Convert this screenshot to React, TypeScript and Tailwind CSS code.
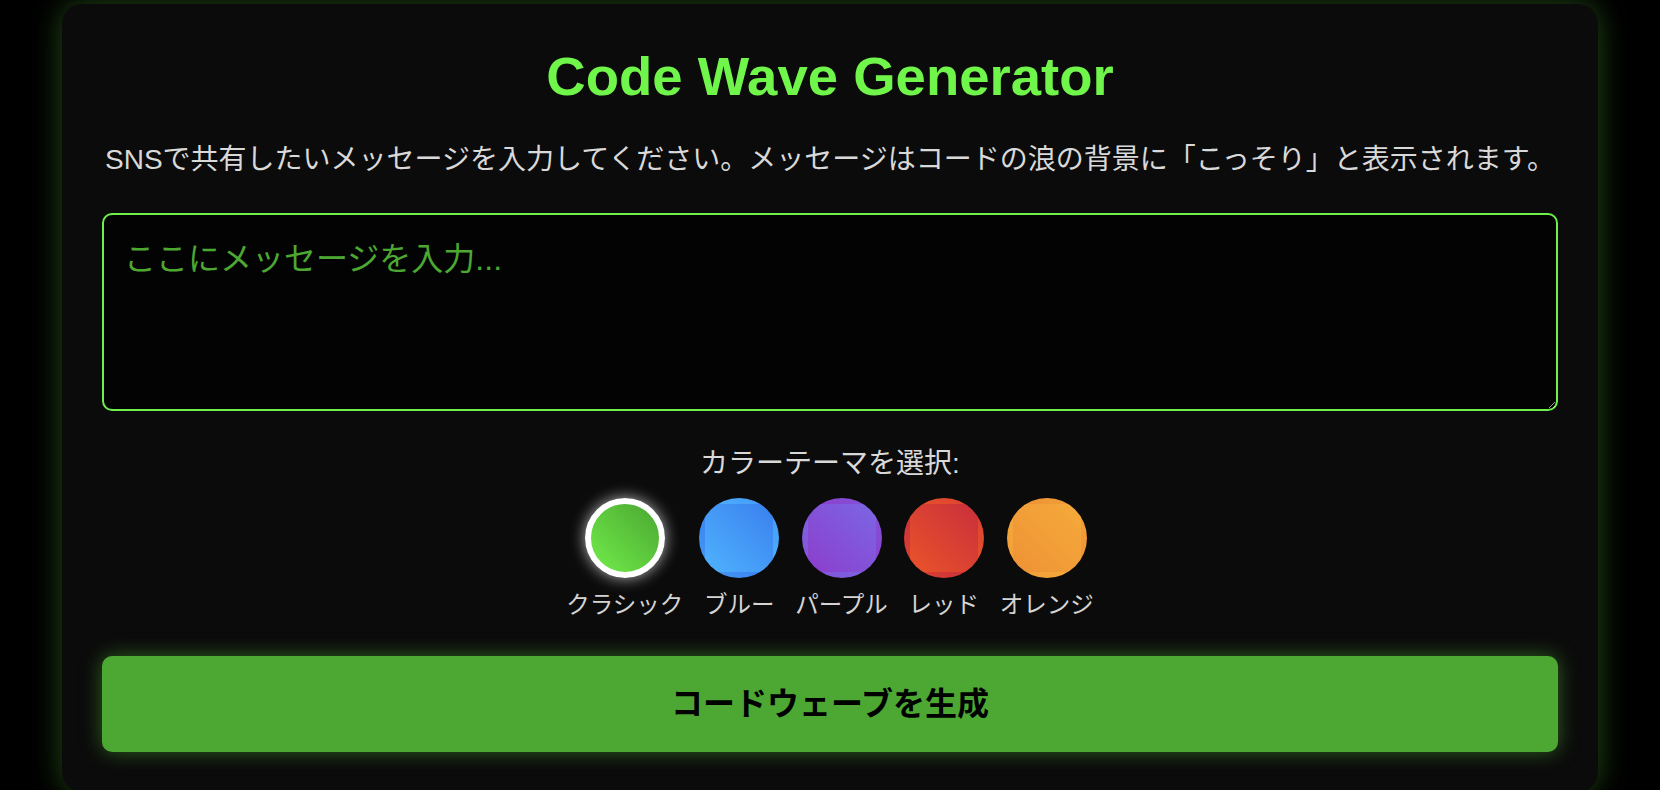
import React, { useState } from "react";

const themes = [
  { key: "classic", label: "クラシック", bg: "bg-[linear-gradient(45deg,#72ec4c,#4aa730)]" },
  { key: "blue", label: "ブルー", bg: "bg-[linear-gradient(45deg,#4fb2fd,#3a80ef)]" },
  { key: "purple", label: "パープル", bg: "bg-[linear-gradient(45deg,#8c3ecc,#7b66e4)]" },
  { key: "red", label: "レッド", bg: "bg-[linear-gradient(45deg,#ea532a,#c92f3b)]" },
  { key: "orange", label: "オレンジ", bg: "bg-[linear-gradient(45deg,#ee9236,#f5aa3a)]" },
];

export default function App() {
  const [selected, setSelected] = useState("classic");
  const [msg, setMsg] = useState("");
  return (
    <div className="min-h-screen bg-black pt-[4px] flex justify-center font-['Liberation_Sans','Noto_Sans_CJK_JP',sans-serif]">
      <div className="w-[1536px] bg-[#0b0b0b] rounded-[20px] p-10 shadow-[0_0_30px_rgba(111,245,74,0.3)]">
        <h1 className="text-center text-[54.5px] leading-[65px] font-bold text-[#70f54b] mb-[30px]">
          Code Wave Generator
        </h1>
        <p className="text-center text-[28px] leading-[42px] text-[#d9d9d9] whitespace-nowrap mb-[32px]">
          SNSで共有したいメッセージを入力してください。メッセージはコードの浪の背景に「こっそり」と表示されます。
        </p>
        <textarea
          value={msg}
          onChange={(e) => setMsg(e.target.value)}
          placeholder="ここにメッセージを入力..."
          className="block w-full h-[198px] bg-[#030303] border-2 border-[#6ef04a] rounded-[10px] p-[20px] text-[32px] leading-[1.5] text-[#6ef04a] placeholder:text-[#4ca832] outline-none"
        />
        <div className="mt-[32px] text-center text-[28px] leading-[42px] text-[#d9d9d9]">
          カラーテーマを選択:
        </div>
        <div className="mt-[13px] flex justify-center gap-[16px]">
          {themes.map((t) => (
            <button
              key={t.key}
              onClick={() => setSelected(t.key)}
              className="flex flex-col items-center gap-[10px]"
            >
              <span
                className={`block w-[80px] h-[80px] rounded-full border-[6px] ${t.bg} ${
                  selected === t.key
                    ? "border-white shadow-[0_0_15px_rgba(255,255,255,0.7)]"
                    : "border-transparent"
                }`}
              />
              <span className="text-[23.5px] leading-[35px] text-[#d4d4d4] whitespace-nowrap">
                {t.label}
              </span>
            </button>
          ))}
        </div>
        <button className="mt-[33px] w-full h-[96px] rounded-[10px] bg-[#4ca832] text-black text-[32px] font-bold shadow-[0_0_20px_rgba(76,168,50,0.55)]">
          コードウェーブを生成
        </button>
      </div>
    </div>
  );
}
